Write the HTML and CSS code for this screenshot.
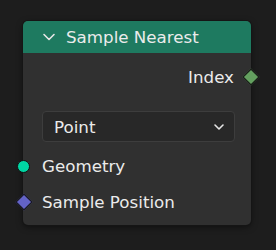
FILE: index.html
```html
<!DOCTYPE html>
<html lang="en">
<head>
  <meta charset="UTF-8" />
  <title>Sample Nearest</title>
  <link rel="stylesheet" href="styles.css">
</head>
<body>
  <div class="node">
    <div class="header">
      <svg class="chevron" width="14" height="10" viewBox="0 0 14 10">
        <path d="M2 2.5 L7 7.5 L12 2.5" fill="none" stroke="#e6e6e6" stroke-width="1.6" stroke-linecap="round" stroke-linejoin="round"/>
      </svg>
      <span class="title">Sample Nearest</span>
    </div>
    <div class="body">
      <div class="row output">
        <span>Index</span>
        <span class="socket diamond green"></span>
      </div>
      <div class="select">
        <span>Point</span>
        <svg width="12" height="8" viewBox="0 0 12 8">
          <path d="M2 2 L6 6 L10 2" fill="none" stroke="#e6e6e6" stroke-width="1.6" stroke-linecap="round" stroke-linejoin="round"/>
        </svg>
      </div>
      <div class="row input">
        <span class="socket circle teal"></span>
        <span>Geometry</span>
      </div>
      <div class="row input">
        <span class="socket diamond purple"></span>
        <span>Sample Position</span>
      </div>
    </div>
  </div>
</body>
</html>
```
FILE: styles.css
```css
body {
  margin: 0;
  background: #1d1d1d;
  font-family: 'DejaVu Sans', sans-serif;
  color: #ebebeb;
  height: 250px;
  overflow: hidden;
}

.node {
  margin: 21px 0 0 23px;
  width: 228px;
  height: 204px;
  background: #303030;
  border-radius: 5px;
  box-shadow: 0 0 0 1px #151515, 0 2px 6px rgba(0, 0, 0, 0.5);
}

.header {
  height: 32px;
  background: #1e7a60;
  border-radius: 5px 5px 0 0;
  display: flex;
  align-items: center;
  padding-left: 19px;
  gap: 10px;
}

.title {
  font-size: 16.7px;
}

.body {
  padding-top: 6px;
}

.row {
  height: 36px;
  display: flex;
  align-items: center;
  font-size: 16.7px;
  position: relative;
}

.output {
  justify-content: flex-end;
  padding-right: 17px;
}

.input {
  padding-left: 19px;
}

.select {
  margin: 16px 16px 6px 19px;
  height: 29px;
  border: 1px solid #3d3d3d;
  border-radius: 4px;
  background: #282828;
  display: flex;
  align-items: center;
  justify-content: space-between;
  padding: 0 9px 0 11px;
  font-size: 16.7px;
}

.socket {
  position: absolute;
  top: 50%;
}

.circle {
  width: 11px;
  height: 11px;
  border-radius: 50%;
  border: 1px solid #111;
  left: -6px;
  margin-top: -6px;
}

.diamond {
  width: 10px;
  height: 10px;
  border: 1px solid #111;
  transform: rotate(45deg);
  margin-top: -6px;
}

.output .diamond {
  right: -6px;
}

.input .diamond {
  left: -5px;
}

.green { background: #63a05f; }
.teal { background: #00d6a3; }
.purple { background: #6363c7; }
```
